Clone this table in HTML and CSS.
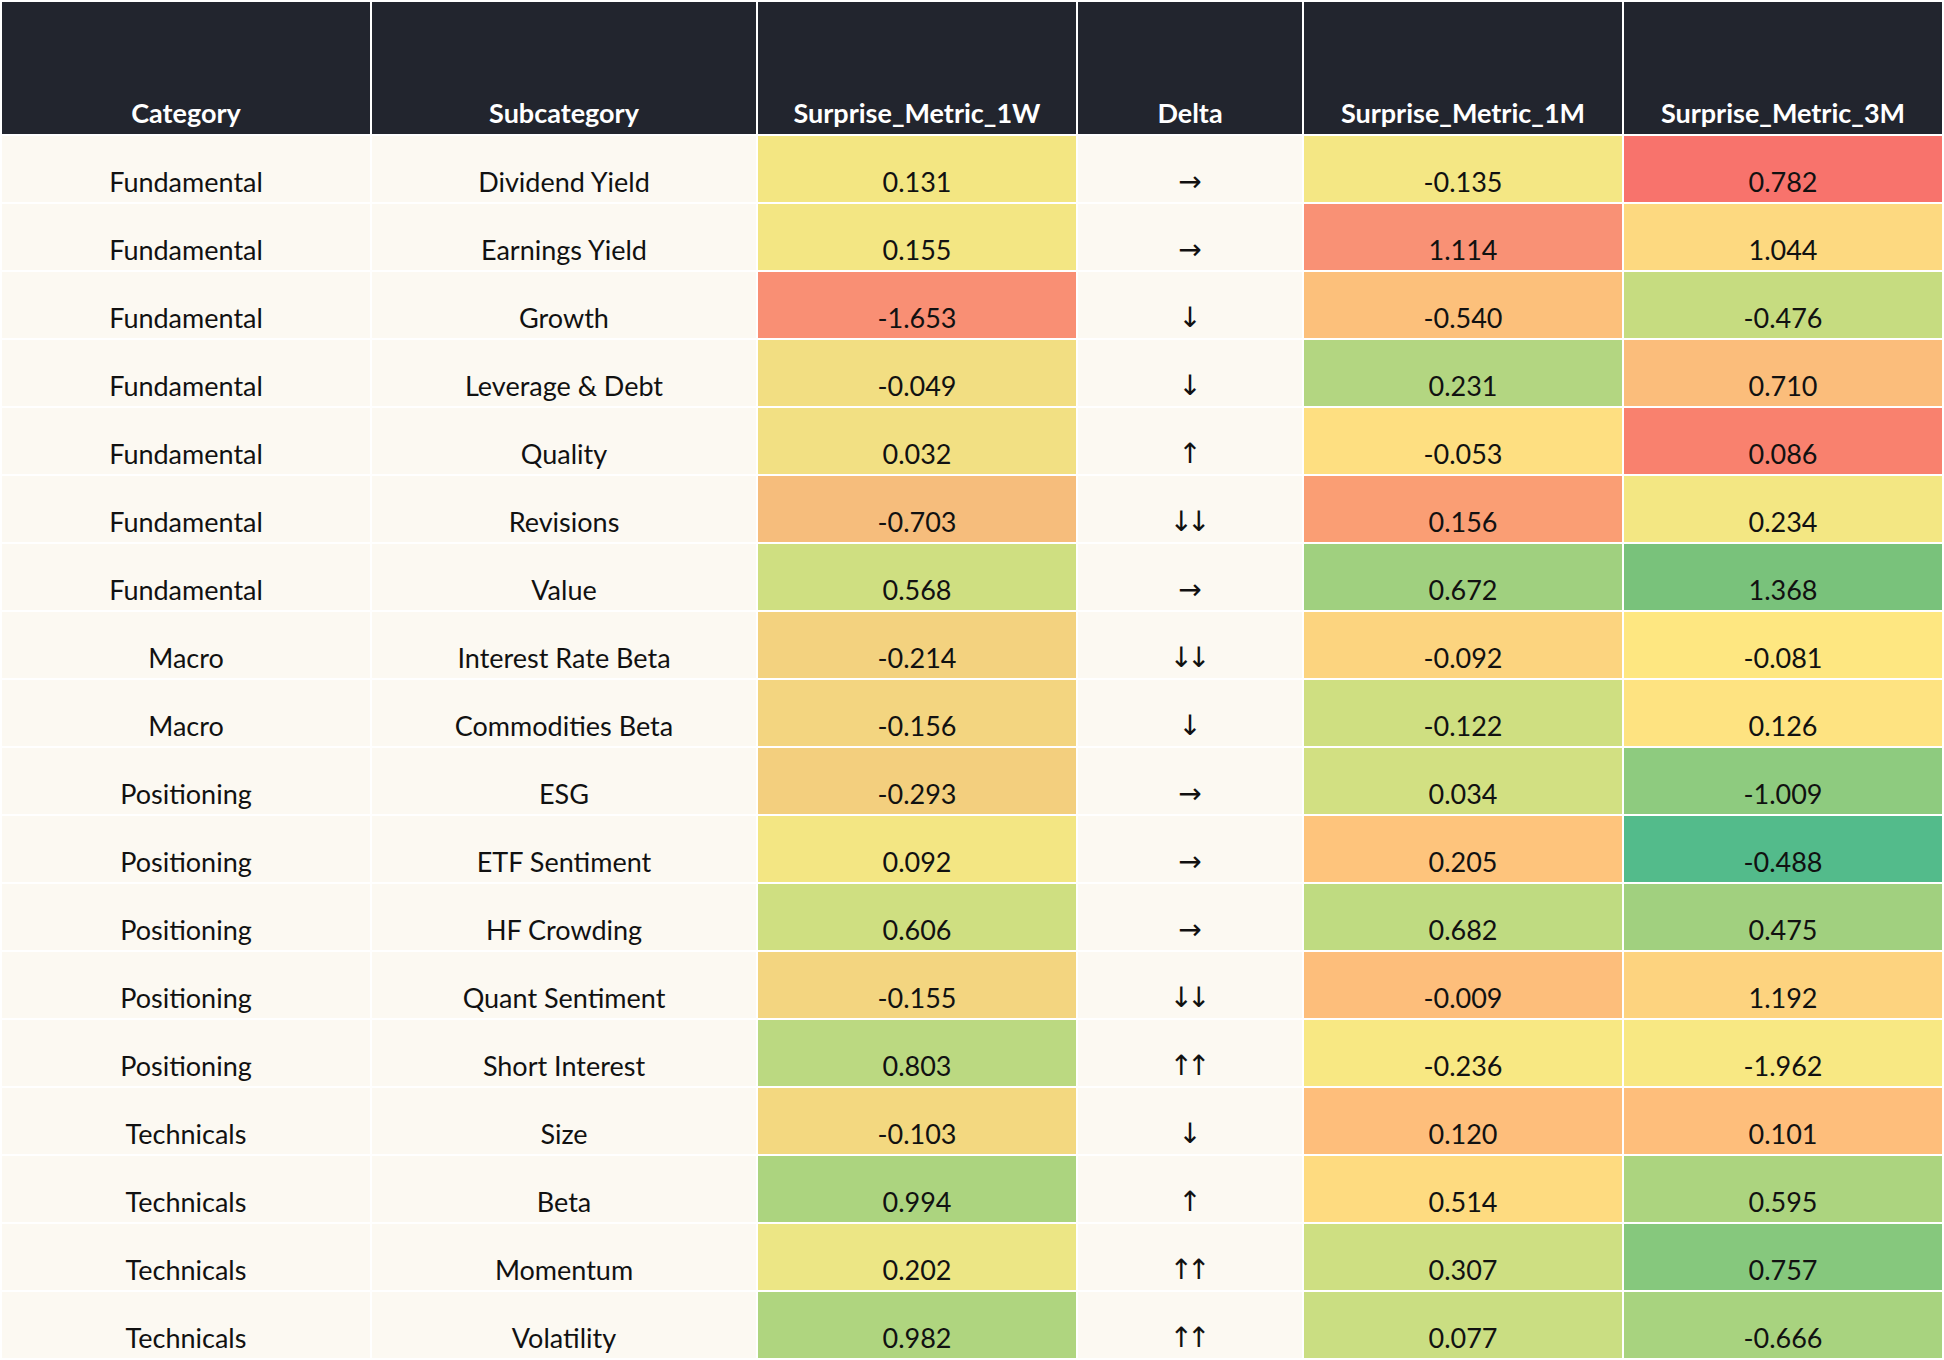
FILE: index.html
```html
<!DOCTYPE html>
<html lang="en">
<head>
<meta charset="utf-8">
<title>Surprise Metrics</title>
<link rel="stylesheet" href="styles.css">
</head>
<body>
<table class="grid">
  <colgroup>
    <col class="c-cat"><col class="c-sub"><col class="c-m"><col class="c-delta"><col class="c-m"><col class="c-m">
  </colgroup>
  <thead>
    <tr>
      <th>Category</th><th>Subcategory</th><th>Surprise_Metric_1W</th><th>Delta</th><th>Surprise_Metric_1M</th><th>Surprise_Metric_3M</th>
    </tr>
  </thead>
  <tbody>
    <tr><td>Fundamental</td><td>Dividend Yield</td><td style="background:#f3e682">0.131</td><td class="d">→</td><td style="background:#f4e784">-0.135</td><td style="background:#f8736c">0.782</td></tr>
    <tr><td>Fundamental</td><td>Earnings Yield</td><td style="background:#f3e683">0.155</td><td class="d">→</td><td style="background:#f99175">1.114</td><td style="background:#fdd980">1.044</td></tr>
    <tr><td>Fundamental</td><td>Growth</td><td style="background:#f98f74">-1.653</td><td class="d">↓</td><td style="background:#fcc07b">-0.540</td><td style="background:#c6dc80">-0.476</td></tr>
    <tr><td>Fundamental</td><td>Leverage &amp; Debt</td><td style="background:#f2de82">-0.049</td><td class="d">↓</td><td style="background:#b3d681">0.231</td><td style="background:#fbbd7b">0.710</td></tr>
    <tr><td>Fundamental</td><td>Quality</td><td style="background:#f2e083">0.032</td><td class="d">↑</td><td style="background:#fedf81">-0.053</td><td style="background:#f9816e">0.086</td></tr>
    <tr><td>Fundamental</td><td>Revisions</td><td style="background:#f6bd7c">-0.703</td><td class="d">↓↓</td><td style="background:#fa9e74">0.156</td><td style="background:#f3e783">0.234</td></tr>
    <tr><td>Fundamental</td><td>Value</td><td style="background:#cfdf81">0.568</td><td class="d">→</td><td style="background:#a0d07f">0.672</td><td style="background:#79c27b">1.368</td></tr>
    <tr><td>Macro</td><td>Interest Rate Beta</td><td style="background:#f3d27f">-0.214</td><td class="d">↓↓</td><td style="background:#fcd47f">-0.092</td><td style="background:#fee781">-0.081</td></tr>
    <tr><td>Macro</td><td>Commodities Beta</td><td style="background:#f3d580">-0.156</td><td class="d">↓</td><td style="background:#cfdf81">-0.122</td><td style="background:#fee381">0.126</td></tr>
    <tr><td>Positioning</td><td>ESG</td><td style="background:#f3cf7e">-0.293</td><td class="d">→</td><td style="background:#d2e082">0.034</td><td style="background:#8ecb7f">-1.009</td></tr>
    <tr><td>Positioning</td><td>ETF Sentiment</td><td style="background:#f3e683">0.092</td><td class="d">→</td><td style="background:#fec47c">0.205</td><td style="background:#53bb8b">-0.488</td></tr>
    <tr><td>Positioning</td><td>HF Crowding</td><td style="background:#cfdf81">0.606</td><td class="d">→</td><td style="background:#bfdb81">0.682</td><td style="background:#a1d07f">0.475</td></tr>
    <tr><td>Positioning</td><td>Quant Sentiment</td><td style="background:#f3d580">-0.155</td><td class="d">↓↓</td><td style="background:#fdbe7b">-0.009</td><td style="background:#fdd37f">1.192</td></tr>
    <tr><td>Positioning</td><td>Short Interest</td><td style="background:#bbd981">0.803</td><td class="d">↑↑</td><td style="background:#f8e883">-0.236</td><td style="background:#f8e883">-1.962</td></tr>
    <tr><td>Technicals</td><td>Size</td><td style="background:#f3d880">-0.103</td><td class="d">↓</td><td style="background:#febe7b">0.120</td><td style="background:#febe7b">0.101</td></tr>
    <tr><td>Technicals</td><td>Beta</td><td style="background:#acd47f">0.994</td><td class="d">↑</td><td style="background:#fedb80">0.514</td><td style="background:#acd47f">0.595</td></tr>
    <tr><td>Technicals</td><td>Momentum</td><td style="background:#ece685">0.202</td><td class="d">↑↑</td><td style="background:#cedf82">0.307</td><td style="background:#86c87d">0.757</td></tr>
    <tr><td>Technicals</td><td>Volatility</td><td style="background:#afd57f">0.982</td><td class="d">↑↑</td><td style="background:#cade82">0.077</td><td style="background:#a8d37f">-0.666</td></tr>
  </tbody>
</table>
</body>
</html>
```

FILE: styles.css
```css
html, body {
  margin: 0;
  padding: 0;
  background: #ffffff;
}

.grid {
  width: 1944px;
  table-layout: fixed;
  border-collapse: separate;
  border-spacing: 2px;
  font-family: Lato, "DejaVu Sans", sans-serif;
  color: #111111;
}

.c-cat { width: 368px; }
.c-sub { width: 384px; }
.c-m { width: 318px; }
.c-delta { width: 224px; }

.grid th {
  height: 132px;
  box-sizing: border-box;
  background: #22252e;
  color: #ffffff;
  font-weight: 700;
  font-size: 27px;
  line-height: 30px;
  text-align: center;
  vertical-align: bottom;
  padding: 0 8px 6px;
  white-space: nowrap;
}

.grid td {
  height: 66px;
  box-sizing: border-box;
  background: #fcf9f2;
  font-size: 27px;
  line-height: 31px;
  text-align: center;
  vertical-align: bottom;
  padding: 0 8px 5px;
  white-space: nowrap;
}

.grid td.d {
  font-family: "DejaVu Sans", sans-serif;
  font-size: 28px;
  letter-spacing: -6px;
  padding-right: 14px;
}
```
